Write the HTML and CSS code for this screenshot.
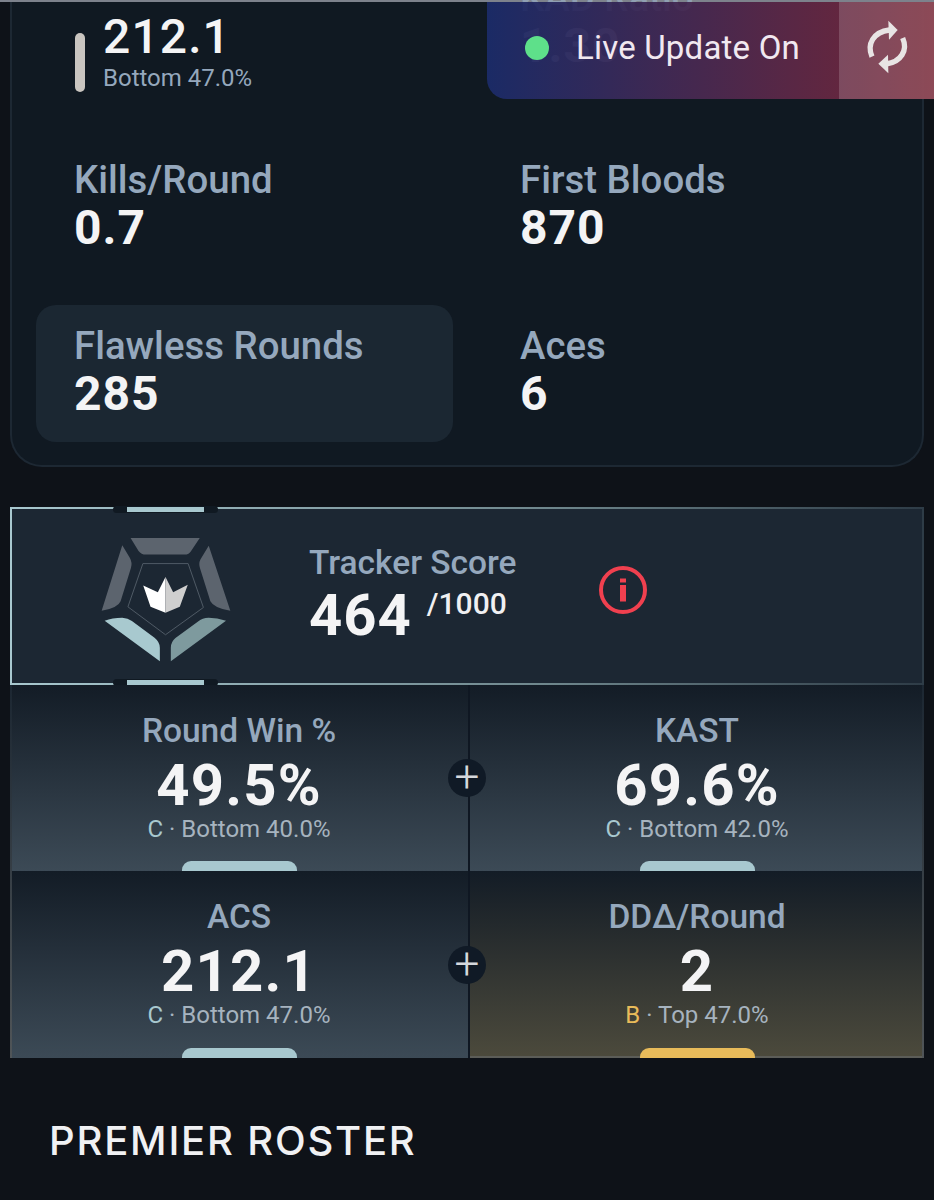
FILE: index.html
```html
<!DOCTYPE html>
<html lang="en">
<head>
<meta charset="utf-8">
<title>Player Stats</title>
<link rel="stylesheet" href="styles.css">
</head>
<body>
<div class="page">
  <div class="toast">
    <div class="toast-main"><span class="dot"></span><span class="toast-text">Live Update On</span></div>
    <div class="toast-refresh">
      <svg class="refresh-icon" viewBox="0 0 162 186" fill="none">
        <path d="M36 122C20 85 40 48 88 42" stroke="#e8e4e4" stroke-width="16"/>
        <path d="M128 66C144 102 124 138 78 144" stroke="#e8e4e4" stroke-width="16"/>
        <path d="M85 14L113 42L87 71Z" fill="#e8e4e4"/>
        <path d="M84 116L55 143L85 172Z" fill="#e8e4e4"/>
      </svg>
    </div>
  </div>

  <section class="card">
    <div class="top-row">
      <div class="acs-row">
        <span class="acs-bar"></span>
        <div class="acs-text">
          <div class="acs-value">212.1</div>
          <div class="acs-sub">Bottom 47.0%</div>
        </div>
      </div>
      <div class="kad">
        <div class="stat-label">KAD Ratio</div>
        <div class="stat-value">1.30</div>
      </div>
    </div>
    <div class="stats">
      <div class="stat"><div class="stat-label">Kills/Round</div><div class="stat-value">0.7</div></div>
      <div class="stat"><div class="stat-label">First Bloods</div><div class="stat-value">870</div></div>
      <div class="stat stat-active"><div class="stat-label">Flawless Rounds</div><div class="stat-value">285</div></div>
      <div class="stat"><div class="stat-label">Aces</div><div class="stat-value">6</div></div>
    </div>
  </section>

  <section class="score">
    <span class="notch notch-top"></span>
    <span class="notch notch-bottom"></span>
    <svg class="rank-icon" viewBox="290 130 410 400">
      <path fill="#5c646e" d="M390 145H598L572 184Q566 195 552 195H436Q422 195 414 184Z"/>
      <path fill="#5c646e" d="M365 167L388 205Q396 220 391 235L360 335Q352 355 303 364Z"/>
      <path fill="#5c646e" d="M625 168L600 210Q594 222 599 237L630 335Q640 355 690 364Z"/>
      <path fill="#a8c9cf" d="M312 394Q335 385 365 385Q382 386 394 395L462 445Q478 458 478 475V516Z"/>
      <path fill="#7e9a9e" d="M677 394Q650 385 625 385Q605 386 595 395L525 446Q511 458 511 475V516Z"/>
      <path fill="none" stroke="#4f5a65" stroke-width="3" d="M427 222H563L609 354L495 436L382 352Z"/>
      <path fill="#ffffff" d="M495 262L472 308L428 288L450 352L495 370Z"/>
      <path fill="#cfcfcf" d="M495 262L518 308L562 286L538 352L495 370Z"/>
    </svg>
    <div class="score-text">
      <div class="score-label">Tracker Score</div>
      <div class="score-line"><span class="score-value">464</span><span class="score-max">/1000</span></div>
    </div>
    <svg class="info-icon" viewBox="0 0 48 48">
      <circle cx="24" cy="24" r="22" fill="none" stroke="#f0404f" stroke-width="4"/>
      <rect x="21" y="12.500" width="6" height="4" fill="#f0404f"/>
      <rect x="21" y="19" width="6" height="16.500" fill="#f0404f"/>
    </svg>
  </section>

  <section class="metrics">
    <div class="metric">
      <div class="metric-label">Round Win %</div>
      <div class="metric-value">49.5%</div>
      <div class="metric-sub"><span class="grade">C</span> · Bottom 40.0%</div>
      <span class="metric-bar"></span>
    </div>
    <div class="metric">
      <div class="metric-label">KAST</div>
      <div class="metric-value">69.6%</div>
      <div class="metric-sub"><span class="grade">C</span> · Bottom 42.0%</div>
      <span class="metric-bar"></span>
    </div>
    <div class="metric">
      <div class="metric-label">ACS</div>
      <div class="metric-value">212.1</div>
      <div class="metric-sub"><span class="grade">C</span> · Bottom 47.0%</div>
      <span class="metric-bar"></span>
    </div>
    <div class="metric metric-gold">
      <div class="metric-label">DDΔ/Round</div>
      <div class="metric-value">2</div>
      <div class="metric-sub"><span class="grade">B</span> · Top 47.0%</div>
      <span class="metric-bar"></span>
    </div>
    <span class="plus plus-top">+</span>
    <span class="plus plus-bottom">+</span>
  </section>

  <h2 class="roster">PREMIER ROSTER</h2>
</div>
</body>
</html>
```
FILE: styles.css
```css
* { box-sizing: border-box; }
html, body { margin: 0; height: 1200px; overflow: hidden; background: #0e1218; }
body { font-family: Roboto, "Liberation Sans", sans-serif; }
.page { position: relative; height: 1200px; padding: 2px 10px 0; border-top: 2px solid #7d828c; }

.toast { position: absolute; top: 0; right: 0; width: 447px; height: 97px; display: flex; z-index: 3; border-bottom-left-radius: 20px; overflow: hidden; background: linear-gradient(90deg, rgba(27,43,104,.96) 0%, rgba(122,38,54,.96) 100%); }
.toast-main { flex: 1; display: flex; align-items: center; padding-left: 38px; gap: 27px; padding-bottom: 6px; }
.dot { width: 24px; height: 24px; border-radius: 50%; background: #5ee08a; }
.toast-text { color: #f1e8f0; font-size: 33px; letter-spacing: .2px; }
.toast-refresh { width: 95px; display: flex; align-items: center; justify-content: center; background: rgba(255,255,255,.17); padding-bottom: 8px; }
.refresh-icon { width: 54px; height: 62px; }

.card { height: 465px; margin-top: -2px; background: #101922; border: 2px solid #1d2833; border-top: 0; border-radius: 0 0 32px 32px; padding: 0 24px; }
.top-row { height: 137px; display: grid; grid-template-columns: 1fr 1fr; column-gap: 30px; }
.acs-row { display: flex; padding: 9px 0 0 39px; gap: 18px; }
.acs-bar { width: 10px; height: 59px; margin-top: 22px; border-radius: 5px; background: #c9c5c0; }
.acs-value { color: #f4f4f5; font-size: 48px; font-weight: 500; line-height: 52px; letter-spacing: 1.100px; }
.acs-sub { color: #95a8bd; font-size: 24px; line-height: 30px; }
.kad { padding-left: 38px; margin-top: -26px; opacity: .8; }

.stats { display: grid; grid-template-columns: 417px 416px; column-gap: 29px; grid-auto-rows: 137px; row-gap: 29px; }
.stat { padding: 19px 38px; border-radius: 20px; }
.stat-active { background: #1b2732; }
.stat-label { color: #95a8bd; font-size: 38.400px; line-height: 44px; font-weight: 500; }
.stat-value { color: #f4f4f5; font-size: 48px; font-weight: 700; line-height: 52px; letter-spacing: 1px; }

.score { position: relative; height: 178px; margin-top: 40px; display: flex; align-items: center; background: #1c2733; border: 2px solid transparent; border-image: linear-gradient(90deg, #a8c8cf 0%, #6d858b 60%, #2e3c47 100%) 1; padding-left: 85px; }
.notch { position: absolute; left: 101px; width: 105px; height: 7px; background: #101922; border-radius: 4px; }
.notch::after { content: ""; position: absolute; left: 14px; width: 77px; top: 1px; height: 5px; background: #a8c8cf; }
.notch-top { top: -3px; }
.notch-bottom { bottom: -3px; }
.rank-icon { width: 137px; height: 133px; flex: none; margin-top: 6px; }
.score-text { margin: 0 0 5px 75px; }
.score-label { color: #95a8bd; font-size: 33.500px; font-weight: 500; line-height: 42px; }
.score-line { display: flex; align-items: flex-start; }
.score-value { color: #f4f4f5; font-size: 58px; font-weight: 700; line-height: 62px; letter-spacing: 1px; }
.score-max { color: #f0f0f2; font-size: 30px; font-weight: 500; line-height: 40px; margin-left: 15px; }
.info-icon { width: 48px; height: 48px; margin: 0 0 12px 82px; }

.metrics { position: relative; display: grid; grid-template-columns: 458px 1fr; grid-template-rows: 186px 187px; border-left: 2px solid transparent; border-right: 2px solid transparent; border-image: linear-gradient(180deg, #1c2732, #505558) 1; }
.metric { position: relative; text-align: center; background: linear-gradient(180deg, #131c26 0%, #3c4a56 100%); padding-top: 24px; overflow: hidden; }
.metric:nth-child(odd) { border-right: 2px solid #0f1722; padding-right: 2px; }
.metric:nth-child(even) { padding-left: 2px; }
.metric-gold { background: linear-gradient(180deg, #131c26 0%, #4c4a3c 100%); box-shadow: inset 0 -2px #5c5d58; }
.metric-label { color: #95a8bd; font-size: 33.500px; font-weight: 500; line-height: 43px; }
.metric-value { color: #f4f4f5; font-size: 58px; font-weight: 700; line-height: 62px; letter-spacing: 1.200px; margin-top: 2px; }
.metric-sub { color: #a6b3bf; font-size: 24px; line-height: 28px; margin-top: -1px; }
.grade { color: #a8c8cf; }
.metric-gold .grade { color: #e8bb5a; }
.metric-bar { position: absolute; bottom: 0; left: 50%; margin-left: -58px; width: 115px; height: 10px; border-radius: 9px 9px 0 0; background: #a8c8cf; }
.metric:nth-child(even) .metric-bar { margin-left: -56px; }
.metric-gold .metric-bar { background: #e8bb5a; }
.plus { position: absolute; left: 436px; width: 38px; height: 38px; border-radius: 50%; background: #101a26; color: #d5d8dc; font-size: 44px; line-height: 36px; text-align: center; font-weight: 300; }
.plus-top { top: 74px; }
.plus-bottom { top: 261px; }

.roster { margin: 61px 0 0 39px; color: #f0f1f3; font-family: Inter, sans-serif; font-size: 40px; font-weight: 500; letter-spacing: 1.800px; line-height: 44px; }
```
